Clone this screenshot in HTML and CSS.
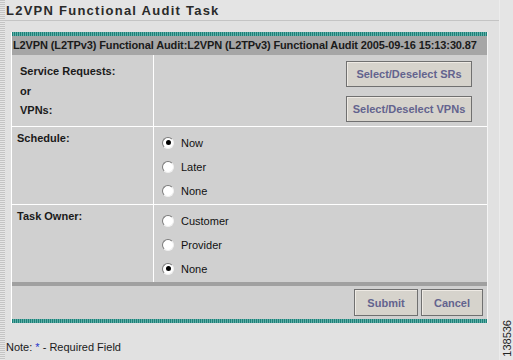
FILE: index.html
```html
<!DOCTYPE html>
<html lang="en">

<head>
    <meta charset="UTF-8">
    <title>L2VPN Functional Audit Task</title>
    <link rel="stylesheet" href="styles.css">
</head>

<body>
    <div class="page">
        <div class="edge"></div>

        <div class="main">
            <h1 class="title">L2VPN Functional Audit Task</h1>

            <div class="panel">
                <div class="teal"></div>
                <div class="head">L2VPN (L2TPv3) Functional Audit:L2VPN (L2TPv3) Functional Audit 2005-09-16 15:13:30.87</div>

                <div class="row row-sr">
                    <div class="label label-sr">
                        <div>Service Requests:</div>
                        <div>or</div>
                        <div>VPNs:</div>
                    </div>
                    <div class="value value-sr">
                        <button class="btn btn-wide">Select/Deselect SRs</button>
                        <button class="btn btn-wide">Select/Deselect VPNs</button>
                    </div>
                </div>

                <div class="row">
                    <div class="label">Schedule:</div>
                    <div class="value radios">
                        <label class="radio"><span class="dot checked"></span>Now</label>
                        <label class="radio"><span class="dot"></span>Later</label>
                        <label class="radio"><span class="dot"></span>None</label>
                    </div>
                </div>

                <div class="row row-last">
                    <div class="label">Task Owner:</div>
                    <div class="value radios">
                        <label class="radio"><span class="dot"></span>Customer</label>
                        <label class="radio"><span class="dot"></span>Provider</label>
                        <label class="radio"><span class="dot checked"></span>None</label>
                    </div>
                </div>

                <div class="actions">
                    <button class="btn btn-small">Submit</button>
                    <button class="btn btn-small">Cancel</button>
                </div>
                <div class="teal"></div>
            </div>

            <p class="note">Note: <span class="req">*</span> - Required Field</p>
        </div>

        <div class="side">
            <span class="fig">138536</span>
        </div>
    </div>
</body>

</html>
```

FILE: styles.css
```css
body {
    margin: 0;
    background-color: #e1e1e1;
    font-family: 'Liberation Sans', Arial, sans-serif;
    color: #111;
}

.page {
    display: flex;
    width: 513px;
    height: 360px;
    overflow: hidden;
}

.edge {
    width: 5px;
    flex-shrink: 0;
    background-color: #dcdcdc;
    background-image: repeating-linear-gradient(to bottom, #c4c4c4 0 1px, #e6e6e6 1px 2px);
}

.main {
    width: 494px;
    flex-shrink: 0;
}

.title {
    margin: 0;
    height: 21px;
    padding: 3px 0 0 1px;
    box-sizing: border-box;
    font-size: 13px;
    font-weight: bold;
    letter-spacing: 1.25px;
    color: #2a2a2a;
    border-bottom: 1px solid #c4c4c4;
    background-color: #e4e4e4;
}

.panel {
    margin: 11px 11px 0 6px;
    background-color: #d0d0d0;
    border-left: 1px solid #fff;
    border-right: 1px solid #f4f4f4;
}

.teal {
    height: 4px;
    background-image: repeating-linear-gradient(to right, #1e7f78 0 1px, #5fb0a8 1px 2px);
}

.head {
    height: 19px;
    line-height: 19px;
    padding-left: 1px;
    background-color: #a6a6a6;
    font-size: 11px;
    font-weight: bold;
    letter-spacing: -0.12px;
    color: #1a1a1a;
    white-space: nowrap;
    overflow: hidden;
}

.row {
    display: flex;
    border-bottom: 1px solid #fff;
}

.row-last {
    border-bottom: 4px solid #a0a0a0;
}

.label {
    width: 142px;
    flex-shrink: 0;
    box-sizing: border-box;
    padding: 5px 0 0 5px;
    border-right: 1px solid #fff;
    font-size: 11px;
    font-weight: bold;
    color: #1a1a1a;
}

.label-sr {
    padding: 10px 0 0 8px;
}

.label-sr div {
    height: 19.5px;
}

.value {
    flex: 1;
}

.value-sr {
    display: flex;
    flex-direction: column;
    align-items: flex-end;
    gap: 9px;
    height: 71px;
    box-sizing: border-box;
    padding: 6px 15px 0 0;
}

.btn {
    font-family: 'Liberation Sans', Arial, sans-serif;
    font-size: 11px;
    font-weight: bold;
    color: #63638e;
    background-color: #d6d3cc;
    border: 1px solid #707070;
    box-shadow: inset 1px 1px 0 #eeeae4;
    padding: 0;
}

.btn-wide {
    width: 126px;
    height: 26px;
}

.radios {
    display: flex;
    flex-direction: column;
    gap: 5px;
    padding: 6px 0 4px 8px;
}

.radio {
    display: flex;
    align-items: center;
    height: 19px;
    font-size: 11px;
    color: #111;
}

.dot {
    position: relative;
    width: 12px;
    height: 12px;
    margin-right: 7px;
    border-radius: 50%;
    background-color: #fff;
    border: 1px solid;
    border-color: #7a7a7a #f0f0f0 #f0f0f0 #7a7a7a;
    box-sizing: border-box;
}

.dot.checked::after {
    content: "";
    position: absolute;
    left: 2.5px;
    top: 2.5px;
    width: 5px;
    height: 5px;
    border-radius: 50%;
    background-color: #000;
}

.actions {
    display: flex;
    justify-content: flex-end;
    gap: 3px;
    height: 33px;
    box-sizing: border-box;
    padding: 3px 4px 0 0;
}

.btn-small {
    width: 64px;
    height: 27px;
}

.btn-small + .btn-small {
    width: 62px;
}

.note {
    margin: 18px 0 0 1px;
    font-size: 11px;
    color: #1a1a1a;
}

.req {
    color: #2233cc;
}

.side {
    flex: 1;
    display: flex;
    align-items: flex-end;
    justify-content: center;
    padding-bottom: 3px;
    background-color: #e5e5e5;
    border-left: 1px solid #ececec;
}

.fig {
    writing-mode: vertical-rl;
    transform: rotate(180deg);
    font-size: 11px;
    color: #222;
}
```
